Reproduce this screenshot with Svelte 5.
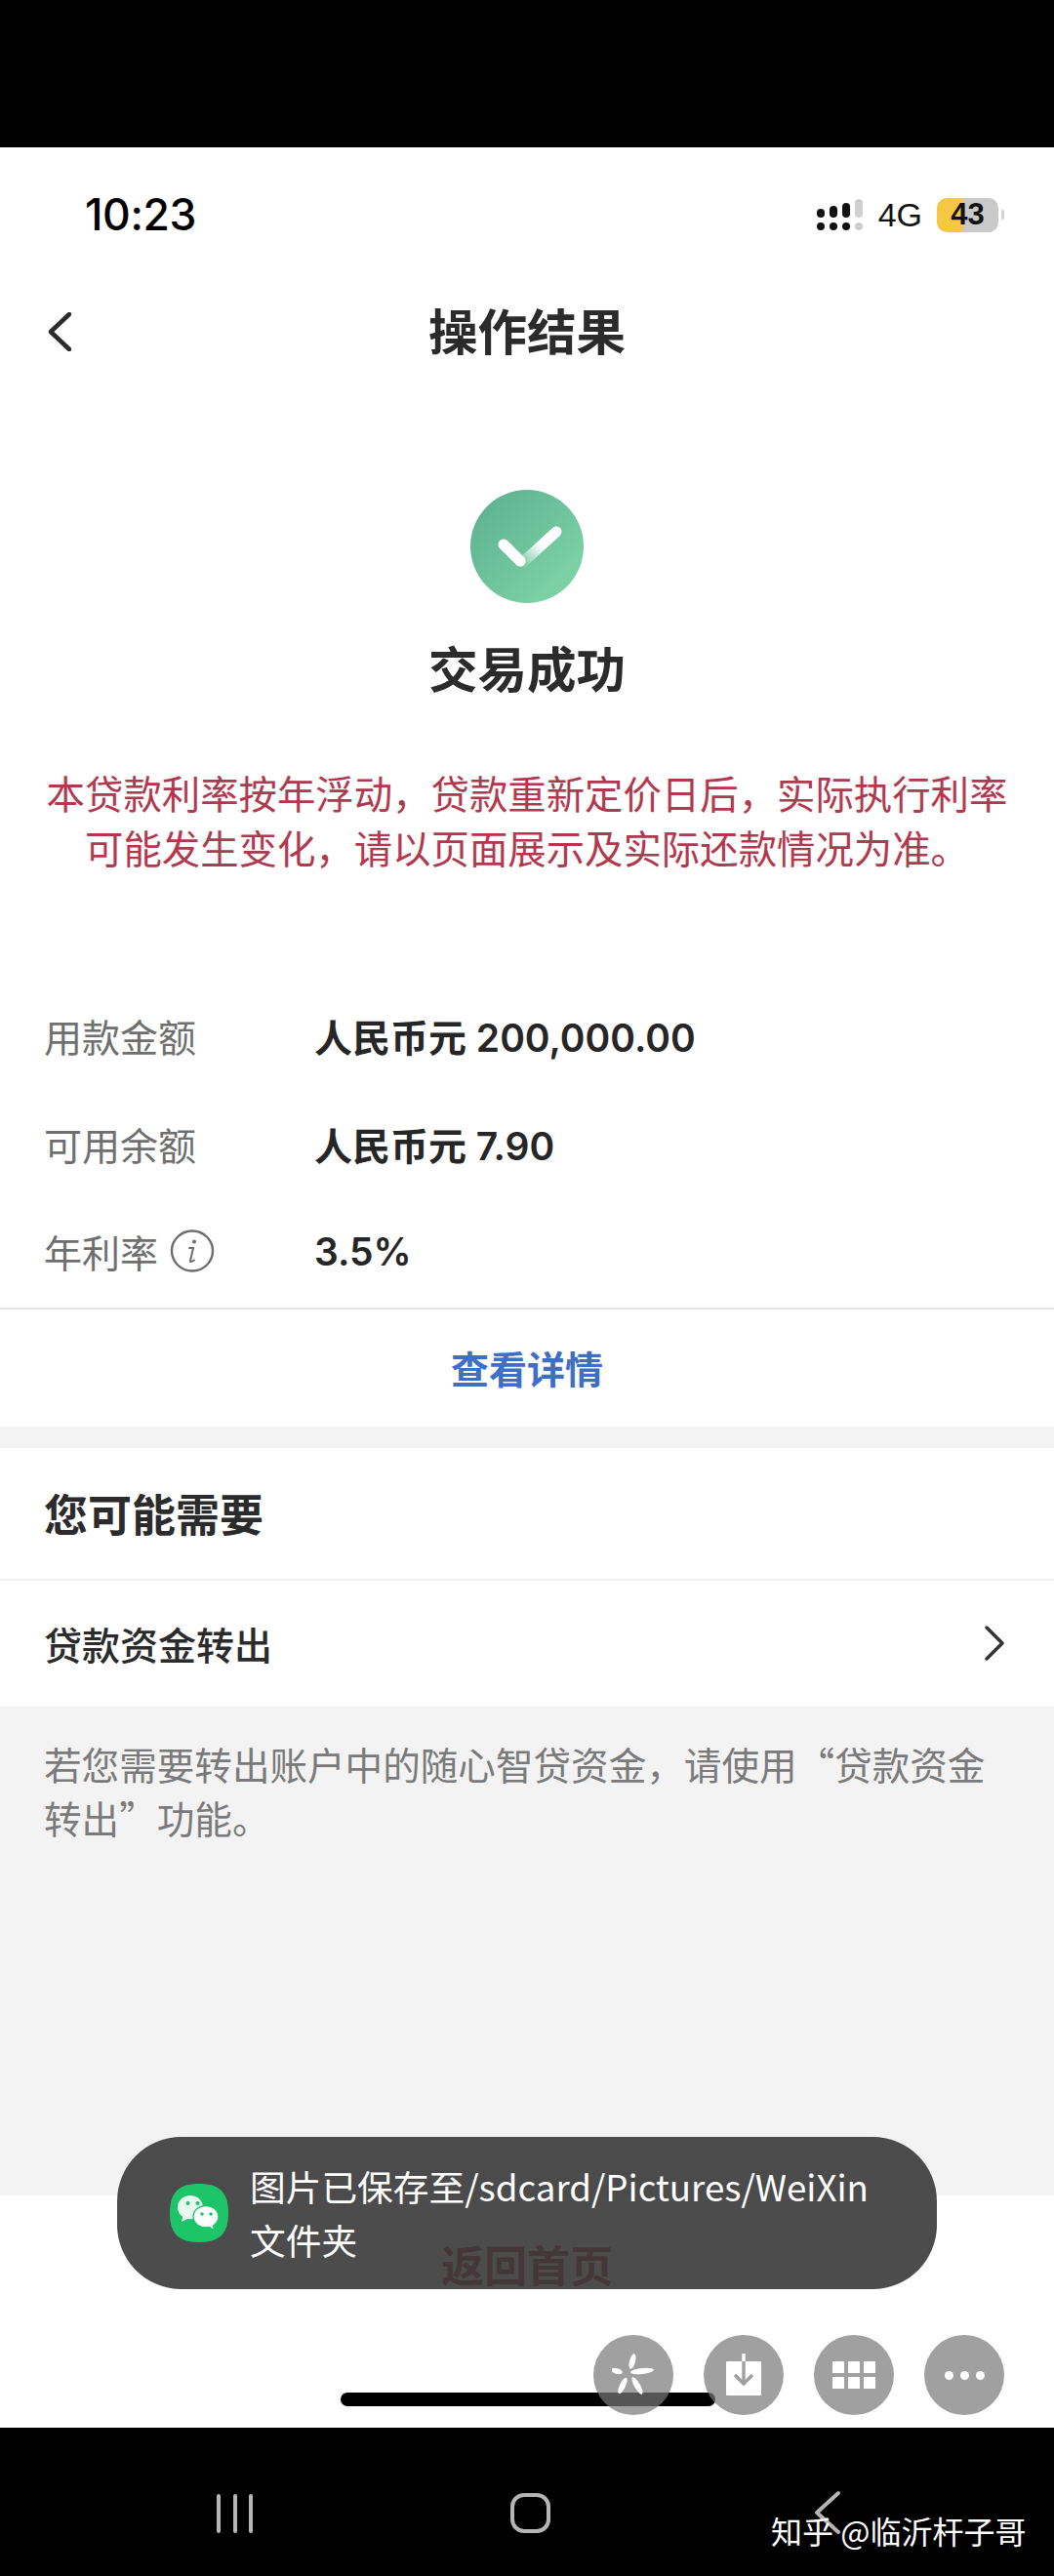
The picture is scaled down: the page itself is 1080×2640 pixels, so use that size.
<script lang="ts">
	const rows = [
		{ label: '用款金额', value: '人民币元 200,000.00' },
		{ label: '可用余额', value: '人民币元 7.90' },
		{ label: '年利率', value: '3.5%', info: true }
	];
	const upperBars = [9, 12, 15];
	const gridCells = [
		[0, 0],
		[16, 0],
		[32, 0],
		[0, 16],
		[16, 16],
		[32, 16]
	];
</script>

<div class="page">
	<div class="black-top"></div>

	<main class="screen">
		<header class="status">
			<span class="time">10:23</span>
			<div class="status-right">
				<div class="signal">
					{#each upperBars as h}
						<div class="sig-col">
							<i class="bar" style="height: {h}px"></i>
							<i class="dot"></i>
						</div>
					{/each}
					<div class="sig-col off">
						<i class="bar" style="height: 19px"></i>
						<i class="dot"></i>
					</div>
				</div>
				<span class="net">4G</span>
				<div class="battery"><span>43</span></div>
				<i class="nub"></i>
			</div>
		</header>

		<nav class="nav">
			<svg class="back" width="24" height="40" viewBox="0 0 24 40">
				<path d="M22 2 3 20l19 18" fill="none" stroke="#2b2b2b" stroke-width="4.5" stroke-linecap="round" stroke-linejoin="round" />
			</svg>
			<h1>操作结果</h1>
		</nav>

		<section class="result">
			<svg class="check" width="116" height="116" viewBox="0 0 116 116">
				<defs>
					<linearGradient id="disc" x1="0" y1="0" x2="1" y2="1">
						<stop offset="0" stop-color="#5aae90" />
						<stop offset="1" stop-color="#84d9a9" />
					</linearGradient>
					<linearGradient id="tick" x1="0" y1="1" x2="1" y2="0">
						<stop offset="0" stop-color="#fff" stop-opacity="0.15" />
						<stop offset="0.55" stop-color="#fff" />
					</linearGradient>
				</defs>
				<circle cx="58" cy="58" r="58" fill="url(#disc)" />
				<path d="M54 74 88 43" stroke="url(#tick)" stroke-width="11" stroke-linecap="round" fill="none" />
				<path d="M34 56 51 73" stroke="#fff" stroke-width="11" stroke-linecap="round" fill="none" />
			</svg>
			<h2>交易成功</h2>
			<p class="notice">本贷款利率按年浮动，贷款重新定价日后，实际执行利率<br />可能发生变化，请以页面展示及实际还款情况为准。</p>
		</section>

		<section class="details">
			{#each rows as row}
				<div class="row">
					<div class="label">
						{row.label}
						{#if row.info}
							<svg class="info" width="46" height="44" viewBox="0 0 46 44">
								<ellipse cx="23" cy="22" rx="21" ry="20.5" fill="none" stroke="#6d6d6d" stroke-width="2.4" />
								<circle cx="25" cy="12.5" r="2" fill="#6d6d6d" />
								<path d="M20 19h4l-3 13c-.3 1.4 1 1.6 4-.5" fill="none" stroke="#6d6d6d" stroke-width="2" stroke-linecap="round" />
							</svg>
						{/if}
					</div>
					<div class="value">{row.value}</div>
				</div>
			{/each}
		</section>

		<div class="more">查看详情</div>
		<div class="band"></div>

		<div class="section-head">您可能需要</div>
		<div class="link-row">
			<span>贷款资金转出</span>
			<svg width="22" height="36" viewBox="0 0 22 36">
				<path d="M3 2l16 16L3 34" fill="none" stroke="#333" stroke-width="3.4" stroke-linecap="round" stroke-linejoin="round" />
			</svg>
		</div>

		<div class="hint">
			<p>若您需要转出账户中的随心智贷资金，请使用“贷款资金转出”功能。</p>
		</div>

		<div class="footer">
			<span class="home-link">返回首页</span>
		</div>

		<div class="indicator"></div>
	</main>

	<div class="black-bottom">
		<div class="recents"><i></i><i></i><i></i></div>
		<div class="home"></div>
		<svg class="sys-back" width="30" height="46" viewBox="0 0 30 46">
			<path d="M26 3 4 23l22 20" fill="none" stroke="#b5b5b5" stroke-width="4" stroke-linecap="round" stroke-linejoin="round" />
		</svg>
		<span class="watermark">知乎 @临沂杆子哥</span>
	</div>

	<div class="toast">
		<svg class="wechat" width="60" height="60" viewBox="0 0 60 60">
			<path d="M30 0c20 0 30 8 30 30s-10 30-30 30S0 52 0 30 10 0 30 0z" fill="#1dc468" />
			<path d="M21 12C13.800 12 8 17.400 8 24.200c0 4 2 7.400 5.200 9.600L12 39l6-3c1 .2 2 .3 3 .3 7.200 0 13-5.400 13-12.100S28.200 12 21 12z" fill="#e8f8ef" />
			<path d="M37 22.500c-7.300 0-13 5-13 11.300S29.700 45 37 45c1.300 0 2.500-.2 3.700-.5L45.500 48l-1-5c3.300-2.100 5.500-5.400 5.500-9.200 0-6.300-5.700-11.300-13-11.300z" fill="#fff" stroke="#1dc468" stroke-width="1.4" />
			<circle cx="18.500" cy="20" r="2" fill="#1dc468" />
			<circle cx="28.500" cy="20" r="2" fill="#1dc468" />
			<circle cx="33" cy="31" r="1.800" fill="#1dc468" />
			<circle cx="42" cy="31" r="1.800" fill="#1dc468" />
		</svg>
		<p>图片已保存至/sdcard/Pictures/WeiXin<br />文件夹</p>
	</div>

	<div class="fabs">
		<div class="fab">
			<svg width="44" height="44" viewBox="0 0 44 44" fill="#fff">
				<ellipse cx="21" cy="8" rx="3" ry="8" transform="rotate(14 21 8)" />
				<ellipse cx="5" cy="18" rx="6" ry="2.800" transform="rotate(16 5 18)" />
				<ellipse cx="31" cy="18" rx="12" ry="3" transform="rotate(-6 31 18)" />
				<ellipse cx="11" cy="33" rx="3" ry="9" transform="rotate(26 11 33)" />
				<ellipse cx="26" cy="33" rx="3" ry="10" transform="rotate(-30 26 33)" />
			</svg>
		</div>
		<div class="fab">
			<svg width="40" height="46" viewBox="0 0 40 46">
				<path d="M3 9h34a1 1 0 0 1 1 1v33a1 1 0 0 1-1 1H3a1 1 0 0 1-1-1V10a1 1 0 0 1 1-1z" fill="#fff" />
				<path d="M20 1v30" stroke="#9f9f9f" stroke-width="3.4" />
				<path d="M20 1v8" stroke="#fff" stroke-width="3.4" />
				<path d="M11 23l9 9 9-9" fill="none" stroke="#9f9f9f" stroke-width="3.4" />
			</svg>
		</div>
		<div class="fab">
			<svg width="44" height="28" viewBox="0 0 44 28" fill="#fff">
				{#each gridCells as [x, y]}
					<rect {x} {y} width="12" height="12" />
				{/each}
			</svg>
		</div>
		<div class="fab dots-icon"><i></i><i></i><i></i></div>
	</div>
</div>

<style>
	:global(body) {
		margin: 0;
		background: #000;
	}

	.page {
		position: relative;
		width: 1080px;
		height: 2640px;
		overflow: hidden;
		font-family: 'Noto Sans CJK SC', sans-serif;
		color: #2b2b2b;
	}

	p,
	h1,
	h2 {
		margin: 0;
		font-weight: inherit;
		font-size: inherit;
	}

	.black-top {
		height: 151px;
		background: #000;
	}

	.screen {
		display: flex;
		flex-direction: column;
		height: 2337px;
		background: #fff;
	}

	.status {
		display: flex;
		align-items: center;
		justify-content: space-between;
		height: 138px;
		padding: 0 51px 0 87px;
		box-sizing: border-box;
		flex: none;
	}

	.time {
		font-family: Inter, sans-serif;
		font-size: 44.5px;
		font-weight: 500;
		color: #000;
		letter-spacing: -0.4px;
	}

	.status-right {
		display: flex;
		align-items: center;
	}

	.signal {
		display: flex;
		gap: 5px;
		align-items: flex-end;
	}

	.sig-col {
		display: flex;
		flex-direction: column;
		gap: 5px;
		width: 8px;
	}

	.sig-col i {
		display: block;
		background: #111;
		border-radius: 4px;
	}

	.sig-col .dot {
		height: 8px;
	}

	.sig-col.off i {
		background: #cfcfcf;
	}

	.net {
		margin-left: 16px;
		font-family: 'Liberation Sans', sans-serif;
		font-size: 34px;
		color: #111;
	}

	.battery {
		display: flex;
		align-items: center;
		justify-content: center;
		width: 63px;
		height: 35px;
		margin-left: 15px;
		border-radius: 10px;
		background: linear-gradient(90deg, #f5c843 43%, #c9c9c9 43%);
		font-family: 'Liberation Sans', sans-serif;
		font-size: 31px;
		font-weight: 700;
		color: #111;
	}

	.nub {
		width: 3px;
		height: 10px;
		margin-left: 3px;
		border-radius: 0 2px 2px 0;
		background: #d2d2d2;
	}

	.nav {
		position: relative;
		display: flex;
		align-items: center;
		justify-content: center;
		height: 102px;
		padding-bottom: 6px;
		box-sizing: border-box;
		flex: none;
	}

	.back {
		position: absolute;
		left: 49px;
		top: 31px;
	}

	h1 {
		font-size: 50.5px;
		font-weight: 700;
		line-height: 60px;
	}

	.result {
		display: flex;
		flex-direction: column;
		align-items: center;
		padding-top: 111px;
		flex: none;
	}

	h2 {
		margin-top: 35px;
		font-size: 50.5px;
		font-weight: 700;
		line-height: 60px;
	}

	.notice {
		margin-top: 71px;
		font-size: 39.4px;
		line-height: 56px;
		color: #b2384e;
		text-align: center;
		white-space: nowrap;
	}

	.details {
		margin-top: 111px;
		padding: 0 45px;
		flex: none;
	}

	.row {
		display: flex;
		align-items: center;
		height: 110.5px;
		padding-bottom: 2px;
		box-sizing: border-box;
	}

	.label {
		display: flex;
		align-items: center;
		gap: 12px;
		width: 277px;
		font-size: 39px;
		color: #6f6f6f;
	}

	.value {
		font-family: Inter, 'Noto Sans CJK SC', sans-serif;
		font-size: 39px;
		font-weight: 600;
		color: #262626;
	}

	.more {
		height: 122px;
		line-height: 118px;
		margin-top: 1px;
		border-top: 2px solid #e4e4e4;
		box-sizing: border-box;
		font-size: 39px;
		font-weight: 600;
		color: #3f6fc5;
		text-align: center;
		flex: none;
	}

	.band {
		height: 22px;
		background: #f3f3f3;
		flex: none;
	}

	.section-head {
		height: 136px;
		line-height: 134px;
		padding: 0 45px;
		border-bottom: 2px solid #f1f1f1;
		box-sizing: border-box;
		font-size: 45px;
		font-weight: 700;
		flex: none;
	}

	.link-row {
		display: flex;
		align-items: center;
		justify-content: space-between;
		height: 129px;
		padding: 0 50px 0 45px;
		font-size: 39px;
		font-weight: 500;
		flex: none;
		box-sizing: border-box;
	}

	.hint {
		height: 501px;
		padding: 31px 45px 0;
		box-sizing: border-box;
		background: #f3f3f3;
		font-size: 38.6px;
		line-height: 55px;
		color: #7a7a7a;
		flex: none;
	}

	.footer {
		padding-top: 44px;
		text-align: center;
	}

	.home-link {
		font-size: 44px;
		font-weight: 700;
		line-height: 52px;
		color: #b03040;
	}

	.indicator {
		position: absolute;
		left: 349px;
		top: 2452px;
		width: 384px;
		height: 14px;
		border-radius: 7px;
		background: #000;
	}

	.black-bottom {
		position: relative;
		height: 152px;
		background: #000;
	}

	.recents {
		position: absolute;
		left: 222px;
		top: 68px;
		display: flex;
		gap: 12.5px;
	}

	.recents i {
		display: block;
		width: 4px;
		height: 40px;
		border-radius: 2px;
		background: #b5b5b5;
	}

	.home {
		position: absolute;
		left: 523px;
		top: 67px;
		width: 41px;
		height: 41px;
		box-sizing: border-box;
		border: 4px solid #b5b5b5;
		border-radius: 14px;
	}

	.sys-back {
		position: absolute;
		left: 833px;
		top: 64px;
	}

	.watermark {
		position: absolute;
		left: 790px;
		top: 84px;
		font-size: 32px;
		line-height: 42px;
		color: #fff;
		white-space: nowrap;
	}

	.toast {
		position: absolute;
		left: 120px;
		top: 2190px;
		display: flex;
		align-items: center;
		gap: 22px;
		width: 840px;
		height: 156px;
		padding-left: 54px;
		box-sizing: border-box;
		border-radius: 66px;
		background: rgba(57, 57, 57, 0.9);
		color: #fff;
		font-size: 36.7px;
		line-height: 55px;
	}

	.wechat {
		flex: none;
	}

	.fabs {
		position: absolute;
		left: 608px;
		top: 2393px;
		display: flex;
		gap: 31px;
	}

	.fab {
		display: flex;
		align-items: center;
		justify-content: center;
		width: 82px;
		height: 82px;
		border-radius: 50%;
		background: rgba(120, 120, 120, 0.706);
	}

	.dots-icon {
		gap: 7px;
	}

	.dots-icon i {
		width: 9px;
		height: 9px;
		border-radius: 50%;
		background: #fff;
	}
</style>
